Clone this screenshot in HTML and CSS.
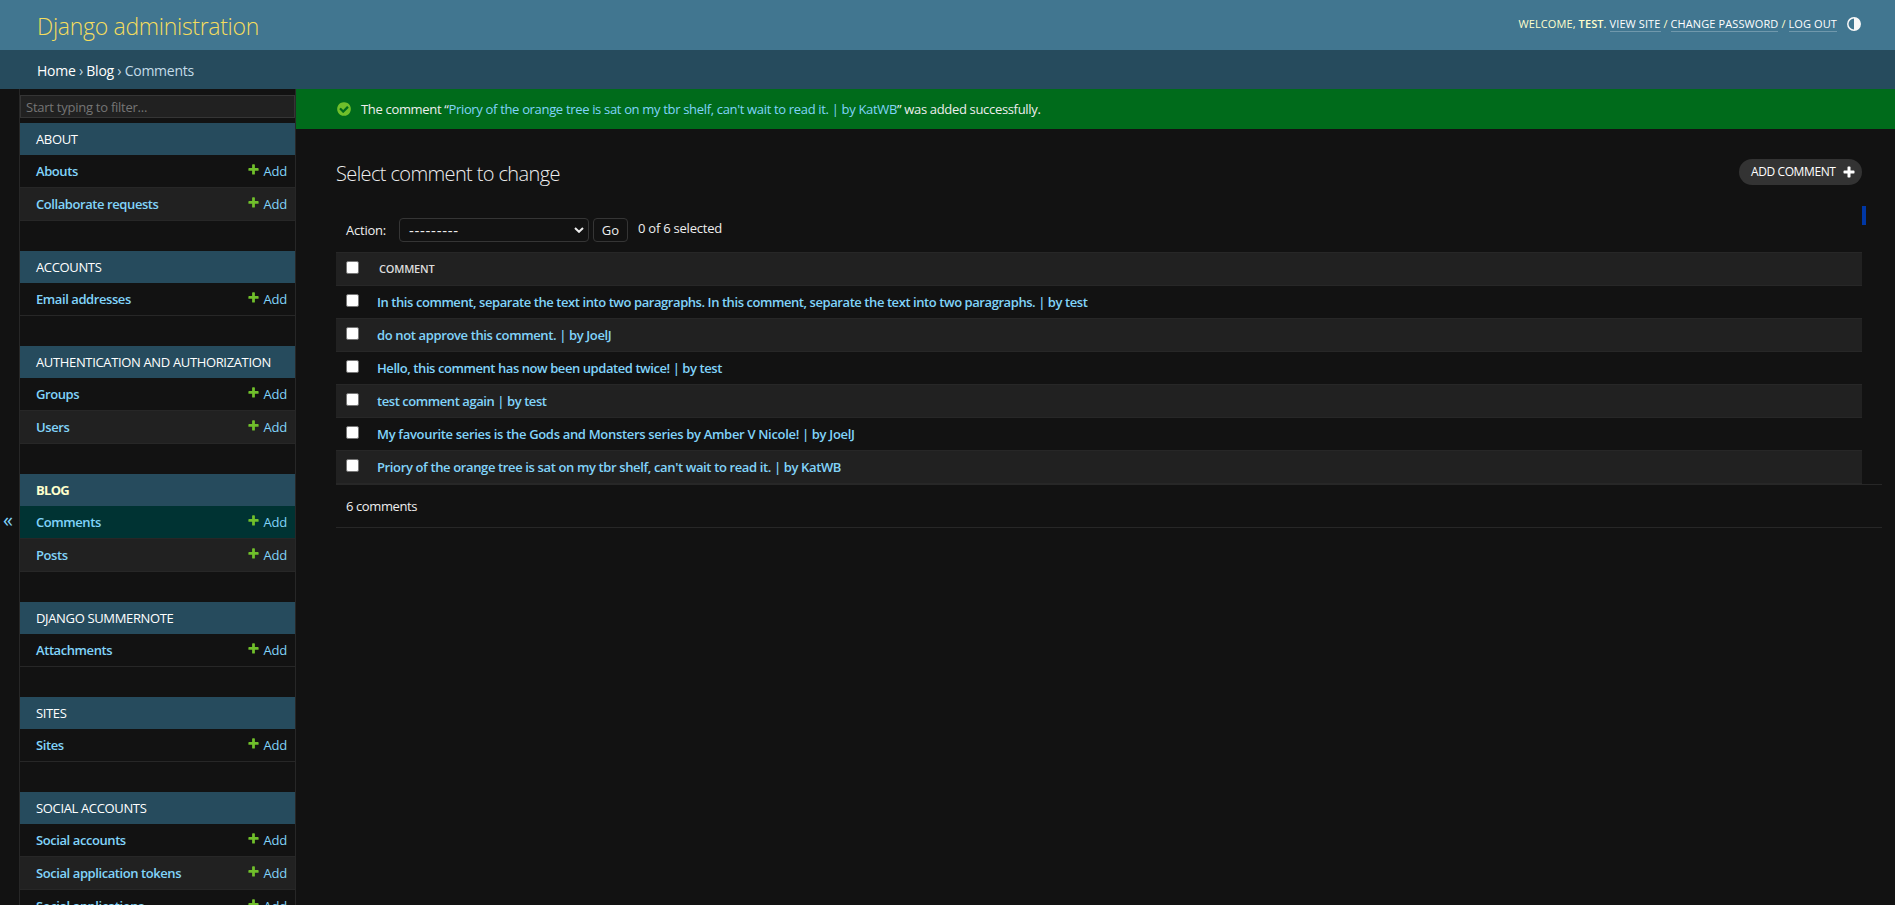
FILE: index.html
```html
<!DOCTYPE html>
<html lang="en">
<head>
<meta charset="utf-8">
<title>Select comment to change | Django site admin</title>
<link rel="stylesheet" href="styles.css">
</head>
<body>
<svg width="0" height="0" class="defs">
  <symbol id="plus" viewBox="0 0 1792 1792"><path d="M1600 796v192q0 40-28 68t-68 28h-416v416q0 40-28 68t-68 28h-192q-40 0-68-28t-28-68v-416h-416q-40 0-68-28t-28-68v-192q0-40 28-68t68-28h416v-416q0-40 28-68t68-28h192q40 0 68 28t28 68v416h416q40 0 68 28t28 68z"/></symbol>
  <symbol id="check" viewBox="0 0 1792 1792"><path d="M1412 734q0-28-18-46l-91-90q-19-19-45-19t-45 19l-408 407-226-226q-19-19-45-19t-45 19l-91 90q-18 18-18 46 0 27 18 45l362 362q19 19 45 19 27 0 46-19l543-543q18-18 18-45zm252 162q0 209-103 385.500t-279.500 279.500-385.500 103-385.500-103-279.500-279.500-103-385.500 103-385.500 279.500-279.500 385.500-103 385.500 103 279.500 279.500 103 385.500z"/></symbol>
</svg>
<header class="header">
  <h1 class="site-name">Django administration</h1>
  <div class="user-tools"><span class="tools">Welcome, <strong>test</strong>. <a>View site</a> / <a>Change password</a> / <a>Log out</a></span><svg class="theme" viewBox="0 0 14 14"><circle cx="7" cy="7" r="6.2"/><path d="M7 .8a6.200 6.200 0 0 1 0 12.400z"/></svg></div>
</header>
<nav class="breadcrumbs"><span><a>Home</a> › <a>Blog</a> › Comments</span></nav>
<div class="main">
  <div class="toggle">«</div>
  <nav class="sidebar">
    <input class="filter" type="text" placeholder="Start typing to filter...">
    <section class="module"><h2>About</h2>
      <div class="model"><a class="name">Abouts</a><a class="add"><svg><use href="#plus"/></svg>Add</a></div>
      <div class="model"><a class="name">Collaborate requests</a><a class="add"><svg><use href="#plus"/></svg>Add</a></div>
    </section>
    <section class="module"><h2>Accounts</h2>
      <div class="model"><a class="name">Email addresses</a><a class="add"><svg><use href="#plus"/></svg>Add</a></div>
    </section>
    <section class="module"><h2>Authentication and Authorization</h2>
      <div class="model"><a class="name">Groups</a><a class="add"><svg><use href="#plus"/></svg>Add</a></div>
      <div class="model"><a class="name">Users</a><a class="add"><svg><use href="#plus"/></svg>Add</a></div>
    </section>
    <section class="module current"><h2>Blog</h2>
      <div class="model selected"><a class="name">Comments</a><a class="add"><svg><use href="#plus"/></svg>Add</a></div>
      <div class="model"><a class="name">Posts</a><a class="add"><svg><use href="#plus"/></svg>Add</a></div>
    </section>
    <section class="module"><h2>Django Summernote</h2>
      <div class="model"><a class="name">Attachments</a><a class="add"><svg><use href="#plus"/></svg>Add</a></div>
    </section>
    <section class="module"><h2>Sites</h2>
      <div class="model"><a class="name">Sites</a><a class="add"><svg><use href="#plus"/></svg>Add</a></div>
    </section>
    <section class="module"><h2>Social Accounts</h2>
      <div class="model"><a class="name">Social accounts</a><a class="add"><svg><use href="#plus"/></svg>Add</a></div>
      <div class="model"><a class="name">Social application tokens</a><a class="add"><svg><use href="#plus"/></svg>Add</a></div>
      <div class="model"><a class="name">Social applications</a><a class="add"><svg><use href="#plus"/></svg>Add</a></div>
    </section>
  </nav>
  <main class="content">
    <div class="message"><svg><use href="#check"/></svg><span>The comment “<a>Priory of the orange tree is sat on my tbr shelf, can't wait to read it. | by KatWB</a>” was added successfully.</span></div>
    <div class="title-row"><h2 class="title">Select comment to change</h2><a class="add-comment"><span>Add comment</span><svg><use href="#plus"/></svg></a></div>
    <div class="strip"></div>
    <div class="actions">
      <label>Action:</label>
      <div class="select"><span>---------</span><svg viewBox="0 0 10 6"><path d="M1 1l4 3.800L9 1"/></svg></div>
      <button class="go">Go</button>
      <span class="counter">0 of 6 selected</span>
    </div>
    <div class="results">
      <div class="row head"><i class="box"></i><span>Comment</span></div>
      <div class="row"><i class="box"></i><a>In this comment, separate the text into two paragraphs. In this comment, separate the text into two paragraphs. | by test</a></div>
      <div class="row"><i class="box"></i><a class="wide">do not approve this comment. | by JoelJ</a></div>
      <div class="row"><i class="box"></i><a>Hello, this comment has now been updated twice! | by test</a></div>
      <div class="row"><i class="box"></i><a>test comment again | by test</a></div>
      <div class="row"><i class="box"></i><a class="wider">My favourite series is the Gods and Monsters series by Amber V Nicole! | by JoelJ</a></div>
      <div class="row"><i class="box"></i><a class="wide">Priory of the orange tree is sat on my tbr shelf, can't wait to read it. | by KatWB</a></div>
    </div>
    <p class="paginator"><span>6 comments</span></p>
  </main>
</div>
</body>
</html>
```
FILE: styles.css
```css
* { box-sizing: border-box; }
body {
  margin: 0;
  height: 905px;
  overflow: hidden;
  display: flex;
  flex-direction: column;
  background: #121212;
  color: #eee;
  font: 13px/18px "Open Sans", "Noto Sans", sans-serif;
}
h1, h2, p { margin: 0; font-weight: 400; }
.defs { position: absolute; }
svg { flex: none; }

.header {
  flex: none;
  height: 50px;
  padding: 0 34px 0 37px;
  display: flex;
  align-items: center;
  justify-content: space-between;
  background: #417690;
  color: #ffc;
}
.site-name { font-size: 23px; line-height: 30px; font-weight: 300; color: #f5dd5d; letter-spacing: -0.3px; padding-top: 1px; }
.user-tools { display: flex; align-items: center; gap: 10px; font-size: 11px; text-transform: uppercase; height: 18px; margin-bottom: 2px; }
.tools { letter-spacing: 0.1px; white-space: nowrap; }
.tools strong { font-weight: 600; }
.tools a { color: #fff; border-bottom: 1px solid rgba(255, 255, 255, .25); }
.theme { width: 14px; height: 14px; }
.theme circle { fill: none; stroke: #f8f8f8; stroke-width: 1.5; }
.theme path { fill: #f8f8f8; }

.breadcrumbs { flex: none; height: 39px; padding: 2px 37px 0; display: flex; align-items: center; background: #264b5d; color: #c4dce8; font-size: 14px; }
.breadcrumbs span { letter-spacing: -0.25px; }
.breadcrumbs a { color: #fff; }

.main { flex: 1; min-height: 0; display: flex; }
.toggle { width: 20px; border-right: 1px solid #272727; display: flex; align-items: center; padding: 46px 0 0 3px; font-size: 20px; color: #81d4fa; }
.sidebar { width: 276px; flex: none; border-right: 1px solid #272727; padding-top: 6px; overflow: hidden; }
.filter { display: block; width: 275px; height: 23px; margin: 0 0 5px; padding: 1px 5px; background: #212121; border: 1px solid #353535; border-radius: 0; font: 13px "Open Sans", sans-serif; letter-spacing: -0.25px; color: #eee; }
.filter::placeholder { color: #757575; }
.module { margin-bottom: 30px; }
.module h2 { height: 32px; padding: 1px 16px 0; line-height: 31px; font-size: 13px; letter-spacing: -0.35px; text-transform: uppercase; background: #264b5d; color: #fff; white-space: nowrap; }
.current h2 { font-weight: 700; letter-spacing: -0.7px; color: #ffc; }
.model { height: 33px; padding: 0 8px 1px 16px; display: flex; align-items: center; justify-content: space-between; border-bottom: 1px solid #272727; color: #81d4fa; }
.model:nth-of-type(even) { background: #212121; }
.model.selected { background: #033; }
.name { font-weight: 600; letter-spacing: -0.42px; }
.add { display: flex; gap: 3px; letter-spacing: -0.2px; }
.add svg { width: 13px; height: 13px; margin-top: 1px; fill: #70bf2b; }

.content { flex: 1; min-width: 0; }
.message { height: 40px; padding: 1px 40px; display: flex; align-items: center; gap: 9px; letter-spacing: -0.33px; background: #006b1b; }
.message svg { width: 16px; height: 16px; fill: #70bf2b; }
.message a { color: #81d4fa; }
.title-row { height: 77px; padding: 30px 33px 0 40px; display: flex; justify-content: space-between; align-items: flex-start; }
.title { font-size: 20px; line-height: 30px; font-weight: 300; letter-spacing: -0.62px; }
.add-comment { width: 123px; height: 26px; padding: 0 6px 0 12px; display: flex; align-items: center; justify-content: space-between; border-radius: 13px; background: #333; font-size: 12px; letter-spacing: -0.4px; text-transform: uppercase; color: #fff; }
.add-comment svg { width: 14px; height: 14px; fill: #fff; }
.strip { width: 4px; height: 19px; margin-left: auto; margin-right: 29px; background: #0037a4; }
.actions { height: 27px; margin: -7px 0 0 50px; display: flex; align-items: flex-start; letter-spacing: -0.23px; }
.actions label { width: 53px; line-height: 25px; }
.select { width: 190px; height: 24px; margin-right: 4px; padding: 0 4px 0 9px; border: 1px solid #353535; border-radius: 4px; display: flex; align-items: center; justify-content: space-between; font-size: 15px; letter-spacing: 0.7px; }
.select svg { width: 10px; height: 6px; fill: none; stroke: #eee; stroke-width: 2; }
.go { width: 35px; height: 24px; padding: 0; border: 1px solid #353535; border-radius: 4px; background: #121212; color: #eee; font: 13px "Open Sans", sans-serif; }
.counter { margin-left: 10px; line-height: 20px; }
.results { margin: 7px 33px 0 40px; }
.row { height: 33px; padding: 7px 10px 0; display: flex; align-items: flex-start; gap: 18px; border-bottom: 1px solid #272727; color: #81d4fa; font-weight: 600; letter-spacing: -0.43px; white-space: nowrap; }
.row:nth-child(odd) { background: #212121; }
.row .wide { letter-spacing: -0.37px; }
.row .wider { letter-spacing: -0.32px; }
.row.head { height: 34px; border-top: 1px solid #272727; gap: 20px; color: #ddd; font-size: 11px; letter-spacing: -0.2px; text-transform: uppercase; }
.box { width: 13px; height: 13px; flex: none; background: #fff; border: 1px solid #767676; border-radius: 2px; margin-top: 1px; }
.paginator { height: 44px; margin: 0 13px 0 40px; padding: 0 10px; line-height: 43px; letter-spacing: -0.4px; border-top: 1px solid #272727; border-bottom: 1px solid #272727; }
```
